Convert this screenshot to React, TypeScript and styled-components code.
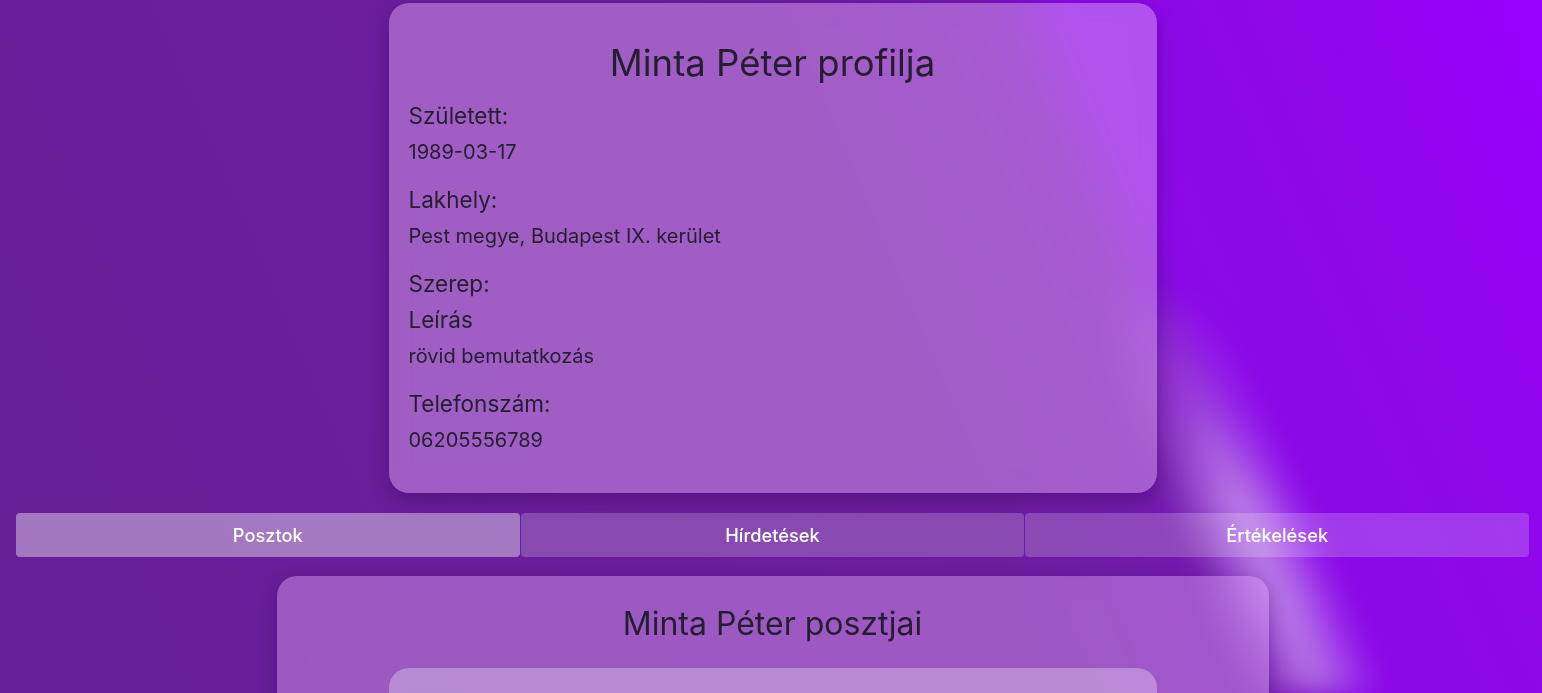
import React from 'react';
import styled, { createGlobalStyle } from 'styled-components';

const GlobalStyle = createGlobalStyle`
    html {
        height: 100%;
        background-color: #6a1e9e;
        background-image: linear-gradient(67deg, #661f96 0%, #6c1d9f 58%, #7419b0 69%, #8a0ae6 74%, #8e08e8 85%, #9a00ff 100%);
        background-repeat: no-repeat;
        background-attachment: fixed;
    }
    html, body {
        margin: 0;
        padding: 0;
        overflow: hidden;
    }
    body {
        min-height: 100%;
        font-family: Inter, "Noto Sans", sans-serif;
        color: #271d30;
    }
    /* soft light streak of the backdrop */
    body::before {
        content: '';
        position: fixed;
        inset: 0;
        z-index: -1;
        pointer-events: none;
        filter: blur(14px);
        background: linear-gradient(
            67deg,
            rgba(215, 180, 245, 0) 68%,
            rgba(215, 180, 245, 0.45) 70.5%,
            rgba(215, 180, 245, 0.7) 72%,
            rgba(215, 180, 245, 0.4) 73.5%,
            rgba(215, 180, 245, 0) 75.5%
        );
        -webkit-mask-image: linear-gradient(to bottom, transparent 280px, rgba(0, 0, 0, 0.45) 400px, black 500px, black 600px, rgba(0, 0, 0, 0.85) 693px);
        mask-image: linear-gradient(to bottom, transparent 280px, rgba(0, 0, 0, 0.45) 400px, black 500px, black 600px, rgba(0, 0, 0, 0.85) 693px);
    }
`;

const Page = styled.div`
    padding: 3px 13px 0 16px;
`;

const ProfileCard = styled.section`
    width: 768px;
    margin: 0 auto;
    box-sizing: border-box;
    padding: 20px;
    border-radius: 20px;
    background: rgba(226, 172, 247, 0.45);
    backdrop-filter: blur(12px);
    box-shadow: 0 6px 18px rgba(40, 0, 70, 0.35);
`;

const Title = styled.h2<{ $size: number }>`
    margin: 20px 0 18px;
    text-align: center;
    font-size: ${(p) => p.$size}px;
    line-height: 40px;
    font-weight: 400;
`;

const Field = styled.div<{ $tight?: boolean }>`
    margin-bottom: ${(p) => (p.$tight ? 7 : 20)}px;
`;

const Label = styled.div`
    font-size: 22.5px;
    line-height: 29px;
`;

const Value = styled.div`
    margin-top: 10px;
    font-size: 20px;
    line-height: 25px;
`;

const TabBar = styled.nav`
    display: flex;
    gap: 1px;
    margin: 20px 0 19px;
`;

const Tab = styled.button<{ $active?: boolean }>`
    flex: 1;
    height: 44px;
    border: none;
    border-radius: 4px;
    background: ${(p) => (p.$active ? 'rgba(255, 255, 255, 0.4)' : 'rgba(255, 255, 255, 0.2)')};
    color: #fff;
    font-family: Inter, "Noto Sans", sans-serif;
    font-size: 18.3px;
    font-weight: 500;
    cursor: pointer;
`;

const PostsSection = styled.section`
    width: 992px;
    margin: 0 auto;
    box-sizing: border-box;
    padding: 8px 0 20px;
    border-radius: 20px;
    background: rgba(226, 172, 247, 0.42);
    backdrop-filter: blur(12px);
    box-shadow: 0 6px 18px rgba(40, 0, 70, 0.3);

    & > h2 {
        margin: 20px 0 24px;
    }
`;

const PostCard = styled.article`
    width: 768px;
    height: 160px;
    margin: 0 auto;
    border-radius: 20px;
    background: rgba(255, 255, 255, 0.3);
`;

const fields = [
    { label: 'Született:', value: '1989-03-17' },
    { label: 'Lakhely:', value: 'Pest megye, Budapest IX. kerület' },
    { label: 'Szerep:' },
    { label: 'Leírás', value: 'rövid bemutatkozás' },
    { label: 'Telefonszám:', value: '06205556789' },
];

const tabs = ['Posztok', 'Hírdetések', 'Értékelések'];

export default function App(): JSX.Element {
    const [active, setActive] = React.useState(0);
    return (
        <Page>
            <GlobalStyle />
            <ProfileCard>
                <Title $size={36.5}>Minta Péter profilja</Title>
                {fields.map((f) => (
                    <Field key={f.label} $tight={!f.value}>
                        <Label>{f.label}</Label>
                        {f.value && <Value>{f.value}</Value>}
                    </Field>
                ))}
            </ProfileCard>
            <TabBar>
                {tabs.map((t, i) => (
                    <Tab key={t} $active={i === active} onClick={() => setActive(i)}>
                        {t}
                    </Tab>
                ))}
            </TabBar>
            <PostsSection>
                <Title $size={32}>Minta Péter posztjai</Title>
                <PostCard />
            </PostsSection>
        </Page>
    );
}
